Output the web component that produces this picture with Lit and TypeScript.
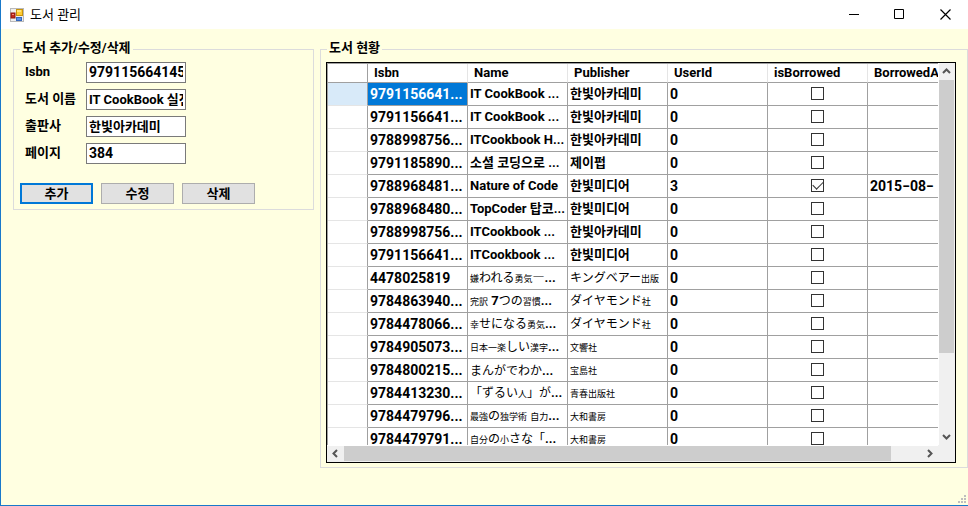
import { LitElement, html, css, svg } from "lit";
import { customElement, property } from "lit/decorators.js";
import { classMap } from "lit/directives/class-map.js";

interface Book {
  isbn: string;
  name: string;
  publisher: string;
  userId: number;
  borrowed: boolean;
  borrowedAt: string;
}

const book = (isbn: string, name: string, publisher: string, userId = 0, borrowed = false, borrowedAt = ""): Book => ({
  isbn, name, publisher, userId, borrowed, borrowedAt,
});

const BOOKS: Book[] = [
  book("9791156641...", "IT CookBook ...", "한빛아카데미"),
  book("9791156641...", "IT CookBook ...", "한빛아카데미"),
  book("9788998756...", "ITCookbook H...", "한빛아카데미"),
  book("9791185890...", "소셜 코딩으로 ...", "제이펍"),
  book("9788968481...", "Nature of Code", "한빛미디어", 3, true, "2015−08−"),
  book("9788968480...", "TopCoder 탑코...", "한빛미디어"),
  book("9788998756...", "ITCookbook ...", "한빛아카데미"),
  book("9791156641...", "ITCookbook ...", "한빛미디어"),
  book("4478025819", "嫌われる勇気―...", "キングベアー出版"),
  book("9784863940...", "完訳 7つの習慣...", "ダイヤモンド社"),
  book("9784478066...", "幸せになる勇気...", "ダイヤモンド社"),
  book("9784905073...", "日本一楽しい漢字...", "文響社"),
  book("9784800215...", "まんがでわか...", "宝島社"),
  book("9784413230...", "「ずるい人」が...", "青春出版社"),
  book("9784479796...", "最強の独学術 自力...", "大和書房"),
  book("9784479791...", "自分の小さな「...", "大和書房"),
];

const COLUMNS = ["Isbn", "Name", "Publisher", "UserId", "isBorrowed", "BorrowedAt"];

/* Kana and kanji fall back to lighter faces of different sizes. */
const mixed = (text: string) =>
  (text.match(/[\u4e00-\u9fff]+|[\u3040-\u30ff\u2015「」]+|[^\u4e00-\u9fff\u3040-\u30ff\u2015「」]+/g) ?? []).map((run) =>
    /[\u4e00-\u9fff]/.test(run)
      ? html`<span class="kanji">${run}</span>`
      : /[\u3040-\u30ff\u2015「」]/.test(run)
        ? html`<span class="kana">${run}</span>`
        : run
  );

const base = css`
  :host {
    font: bold 13px/16px Roboto, "Noto Sans CJK KR", "Noto Sans CJK JP", sans-serif;
    color: #000;
  }
  * {
    box-sizing: border-box;
  }
  button,
  input {
    font: inherit;
    color: inherit;
    margin: 0;
    border-radius: 0;
  }
  .number {
    font-size: 14px;
  }
`;

@customElement("title-bar")
export class TitleBar extends LitElement {
  static styles = [
    base,
    css`
      :host {
        display: flex;
        align-items: center;
        height: 29px;
        background: #fff;
        font-weight: normal;
      }
      .logo {
        margin: 0 6px 0 9px;
        flex: none;
      }
      h1 {
        flex: 1;
        margin: 0;
        font: inherit;
      }
      button {
        display: grid;
        place-items: center;
        width: 46px;
        height: 29px;
        padding: 0;
        border: 0;
        background: none;
      }
    `,
  ];

  render() {
    return html`
      <svg class="logo" width="14" height="14" viewBox="0 0 14 14" aria-hidden="true">
        <rect x="0.5" y="0.5" width="13" height="13" fill="#eee" stroke="#b9b9b9" />
        <rect x="6.5" y="1.5" width="6" height="6" fill="#fc3" stroke="#c8940c" />
        <rect x="7" y="2" width="4" height="2" fill="#ffe47c" />
        <rect x="1" y="5" width="4" height="5" fill="#c3281c" stroke="#8e170f" />
        <rect x="2" y="6" width="2" height="1" fill="#ef8a7c" />
        <rect x="6.5" y="9.5" width="5" height="3" fill="#5b93e6" stroke="#3567bd" />
      </svg>
      <h1>도서 관리</h1>
      <button aria-label="Minimize">
        <svg width="11" height="11"><path d="M1 5.5h10" stroke="#000" /></svg>
      </button>
      <button aria-label="Maximize">
        <svg width="11" height="11"><path d="M.5 .5h9v9h-9z" fill="none" stroke="#000" /></svg>
      </button>
      <button aria-label="Close">
        <svg width="11" height="11"><path d="M.5 .5l10 10M10.5 .5l-10 10" stroke="#000" stroke-width="1.2" /></svg>
      </button>
    `;
  }
}

@customElement("book-form")
export class BookForm extends LitElement {
  static styles = [
    base,
    css`
      :host {
        display: block;
      }
      .fields {
        display: grid;
        grid-template-columns: 61px 100px;
        row-gap: 6px;
        padding: 1px 0 0 11px;
      }
      label {
        line-height: 20px;
      }
      input {
        width: 100px;
        height: 21px;
        padding: 0 2px 2px;
        border: 1px solid #7a7a7a;
        background: #fff;
      }
      .actions {
        display: flex;
        gap: 8px;
        margin-top: 19px;
        padding: 0 6px 5px;
      }
      button {
        width: 73px;
        height: 21px;
        padding: 0;
        border: 1px solid #adadad;
        background: #e1e1e1;
        line-height: 16px;
      }
      .default {
        border: 2px solid #0078d7;
      }
    `,
  ];

  render() {
    const fields = [
      ["isbn", "Isbn", "979115664145"],
      ["name", "도서 이름", "IT CookBook 실전"],
      ["publisher", "출판사", "한빛아카데미"],
      ["pages", "페이지", "384"],
    ];
    return html`
      <div class="fields">
        ${fields.map(
          ([id, label, value]) => html`
            <label for=${id}>${label}</label>
            <input id=${id} class=${classMap({ number: /^\d+$/.test(value) })} .value=${value} />
          `
        )}
      </div>
      <div class="actions">
        <button class="default">추가</button>
        <button>수정</button>
        <button>삭제</button>
      </div>
    `;
  }
}

const ARROWS: Record<string, string> = {
  up: "M1 6l3.5-3.5L8 6",
  down: "M1 3l3.5 3.5L8 3",
  left: "M6 1L2.5 4.5L6 8",
  right: "M3 1l3.5 3.5L3 8",
};
const arrow = (dir: string) => html`
  <button aria-label=${dir}>
    <svg width="9" height="9" viewBox="0 0 9 9">
      ${svg`<path d=${ARROWS[dir]} fill="none" stroke="#555" stroke-width="2" />`}
    </svg>
  </button>
`;

@customElement("book-grid")
export class BookGrid extends LitElement {
  @property({ attribute: false }) books: Book[] = [];

  static styles = [
    base,
    css`
      :host {
        display: grid;
        grid-template-columns: minmax(0, 1fr) 17px;
        grid-template-rows: minmax(0, 1fr) 17px;
        border: 1px solid #000;
        background: #fff;
        overflow: hidden;
      }
      .view {
        overflow: hidden;
        border-top: 1px solid #a0a0a0;
        border-left: 1px solid #a0a0a0;
      }
      table {
        width: 640px;
        table-layout: fixed;
        border-collapse: separate;
        border-spacing: 0;
      }
      .marker {
        width: 40px;
      }
      th,
      td {
        height: 23px;
        padding: 0 0 0 2px;
        border-right: 1px solid #a0a0a0;
        border-bottom: 1px solid #a0a0a0;
        text-align: left;
        white-space: nowrap;
        overflow: hidden;
      }
      thead th {
        height: 19px;
        padding: 0 0 0 6px;
        border-right-color: #e5e5e5;
      }
      thead th.marker {
        border-right-color: #a0a0a0;
      }
      tbody th {
        border-bottom-color: #e5e5e5;
      }
      .current {
        background: #d8eaf9;
      }
      .selected {
        background: #0078d7;
        color: #fff;
      }
      .check {
        padding: 0 0 2px;
        text-align: center;
      }
      .check input {
        appearance: none;
        display: inline-grid;
        width: 13px;
        height: 13px;
        border: 1px solid #333;
        background: #fff;
        vertical-align: middle;
      }
      .check input:checked::before {
        content: "";
        width: 9px;
        height: 5px;
        margin: 1px;
        border: solid #333;
        border-width: 0 0 1px 1px;
        transform: rotate(-45deg);
      }
      .kana {
        font: 12px/16px "Noto Sans CJK JP", sans-serif;
      }
      .kanji {
        font: 9px/16px "Noto Sans CJK JP", sans-serif;
      }
      .bar {
        display: flex;
        background: #f0f0f0;
      }
      .bar button {
        flex: none;
        display: grid;
        place-items: center;
        width: 17px;
        height: 17px;
        padding: 0;
        border: 0;
        background: none;
      }
      .track {
        flex: 1;
      }
      .thumb {
        background: #cdcdcd;
      }
      .vertical {
        flex-direction: column;
        border-left: 1px solid #fff;
      }
      .vertical .thumb {
        height: 78.5%;
        margin-right: 1px;
      }
      .vertical button {
        width: 15px;
      }
      .horizontal {
        border-top: 1px solid #fff;
      }
      .horizontal .thumb {
        width: 94.8%;
        height: 15px;
      }
      .horizontal button {
        height: 15px;
      }
      .corner {
        background: #f0f0f0;
      }
    `,
  ];

  render() {
    return html`
      <div class="view">
        <table>
          <thead>
            <tr>
              <th class="marker"></th>
              ${COLUMNS.map((name) => html`<th scope="col">${name}</th>`)}
            </tr>
          </thead>
          <tbody>
            ${this.books.map(
              (b, i) => html`
                <tr>
                  <th class=${classMap({ current: i === 0 })}></th>
                  <td class=${classMap({ number: true, selected: i === 0 })}>${b.isbn}</td>
                  <td>${mixed(b.name)}</td>
                  <td>${mixed(b.publisher)}</td>
                  <td class="number">${b.userId}</td>
                  <td class="check"><input type="checkbox" aria-label="isBorrowed" .checked=${b.borrowed} /></td>
                  <td class="number">${b.borrowedAt}</td>
                </tr>
              `
            )}
          </tbody>
        </table>
      </div>
      <div class="bar vertical">
        ${arrow("up")}
        <div class="track"><div class="thumb"></div></div>
        ${arrow("down")}
      </div>
      <div class="bar horizontal">
        ${arrow("left")}
        <div class="track"><div class="thumb"></div></div>
        ${arrow("right")}
      </div>
      <div class="corner"></div>
    `;
  }
}

@customElement("app-root")
export class AppRoot extends LitElement {
  static styles = [
    base,
    css`
      :host {
        display: flex;
        flex-direction: column;
        height: 100vh;
        border-left: 1px solid #1979ca;
        border-bottom: 1px solid #1979ca;
        background: #ffffe1;
        box-sizing: border-box;
        overflow: hidden;
      }
      main {
        flex: 1;
        min-height: 0;
        display: flex;
        gap: 6px;
        padding: 12px 0 0 12px;
      }
      section {
        display: flex;
        flex-direction: column;
        min-width: 0;
        border: 1px solid #dcdcdc;
        margin-top: 8px;
      }
      h2 {
        align-self: flex-start;
        margin: -10px 0 5px 6px;
        padding: 0 2px;
        background: #ffffe1;
        font: inherit;
        line-height: 16px;
      }
      .editor {
        width: 301px;
        flex: none;
        align-self: flex-start;
      }
      .status {
        flex: 1;
      }
      book-grid {
        flex: 1;
        min-height: 0;
        margin: 1px 11px 4px 5px;
      }
      footer {
        display: flex;
        flex: none;
        justify-content: flex-end;
        align-items: flex-end;
        height: 37px;
        padding: 0 2px 2px;
      }
    `,
  ];

  render() {
    const dots = [[6, 0], [3, 3], [6, 3], [0, 6], [3, 6], [6, 6]];
    return html`
      <title-bar></title-bar>
      <main>
        <section class="editor">
          <h2>도서 추가/수정/삭제</h2>
          <book-form></book-form>
        </section>
        <section class="status">
          <h2>도서 현황</h2>
          <book-grid .books=${BOOKS}></book-grid>
        </section>
      </main>
      <footer>
        <svg width="8" height="8" aria-hidden="true">
          ${dots.map(([x, y]) => svg`<rect x=${x} y=${y} width="2" height="2" fill="#bfbfbf" />`)}
        </svg>
      </footer>
    `;
  }
}
